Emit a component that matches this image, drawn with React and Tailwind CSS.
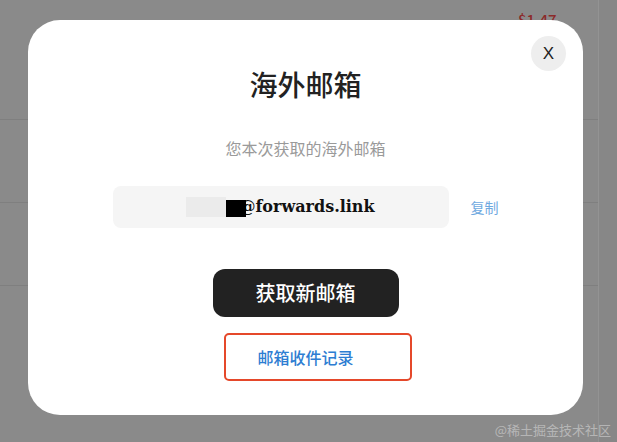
const ROWS = [120, 83, 83, 156];

export default function App() {
  return (
    <div
      className="relative w-[617px] h-[442px] overflow-hidden bg-[#8a8a8a]"
      style={{ fontFamily: '"Noto Sans CJK SC", "Noto Sans", sans-serif' }}
    >
      {/* Page behind the overlay */}
      <div className="flex h-full">
        <div className="flex flex-col w-[598px]">
          {ROWS.map((h, i) => (
            <div
              key={i}
              className="border-b border-[#7f7f7f] last:border-b-0"
              style={{ height: h }}
            />
          ))}
        </div>
        <div className="w-[19px] h-full border-l border-[#939393] bg-[#878787]" />
      </div>
      <span className="absolute left-[518px] top-[9px] text-[15px] font-medium text-[#8c2a2a]">
        $1.47
      </span>

      {/* Modal */}
      <div className="absolute left-[28px] top-[20px] w-[555px] h-[395px] bg-white rounded-[32px] flex flex-col items-center">
        <button
          className="absolute right-[17px] top-[16px] w-[35px] h-[35px] rounded-full bg-[#eeeeee] flex items-center justify-center text-[17px] leading-none text-[#222]"
          style={{ fontFamily: '"Liberation Sans", sans-serif' }}
        >
          X
        </button>

        <h1 className="mt-[44px] h-[40px] leading-[40px] text-[28px] font-medium text-[#222]">海外邮箱</h1>

        <p className="mt-[32px] h-[24px] leading-[24px] text-[16px] text-[#9a9a9a]">您本次获取的海外邮箱</p>

        <div className="mt-[26px] flex items-center gap-[22px]">
          <div className="w-[336px] h-[42px] rounded-[8px] bg-[#f5f5f5] flex items-center justify-center">
            <span className="w-[40px] h-[20px] bg-[#ebebeb]" />
            <span className="relative z-10 w-[20px] h-[17px] bg-black -mr-[7px] mt-[2px]" />
            <span
              className="text-[16px] font-bold text-[#111]"
              style={{ fontFamily: '"DejaVu Serif", serif' }}
            >
              @forwards.link
            </span>
          </div>
          <span className="text-[14px] text-[#6fa9df]">复制</span>
        </div>

        <button className="mt-[41px] w-[186px] h-[48px] rounded-[12px] bg-[#222222] text-white text-[20px] font-medium">
          获取新邮箱
        </button>

        <div className="relative mt-[16px] w-full h-[48px] flex items-center justify-center">
          <span className="text-[16px] font-medium text-[#2d7dd2]">邮箱收件记录</span>
          {/* annotation box */}
          <div className="absolute left-[196px] top-0 w-[188px] h-[48px] border-[2.5px] border-[#e5482a] rounded-[5px]" />
        </div>
      </div>

      <span className="absolute right-[6px] bottom-[3px] text-[13px] text-white/40">@稀土掘金技术社区</span>
    </div>
  );
}
